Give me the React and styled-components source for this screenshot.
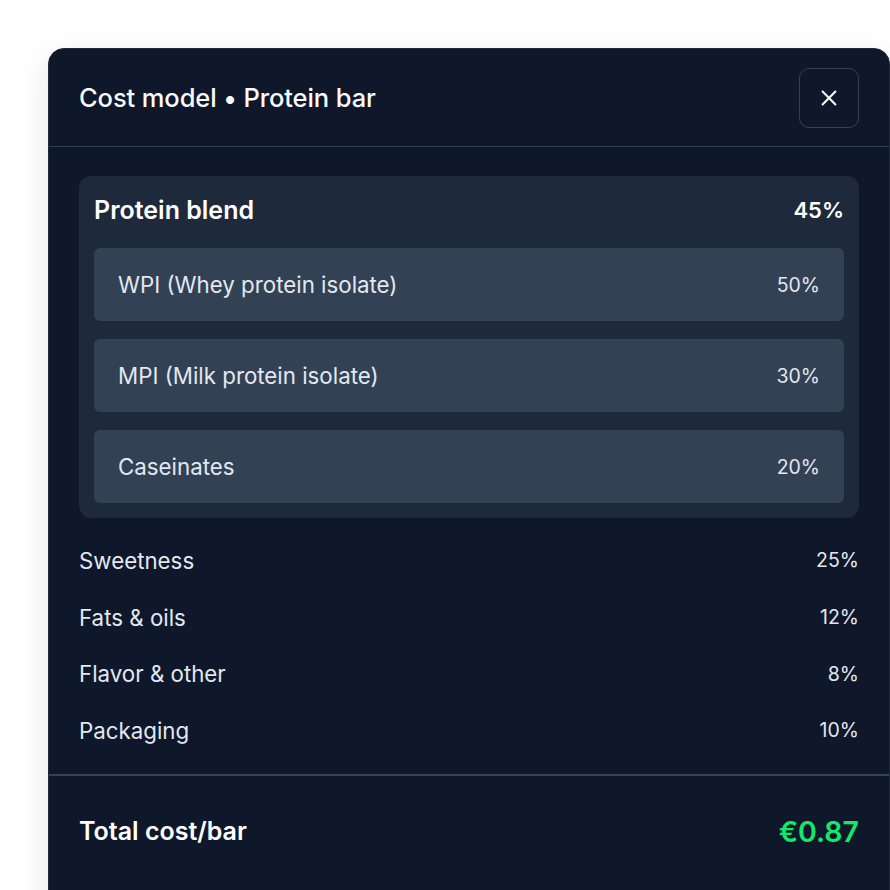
import React from "react";
import styled, { createGlobalStyle } from "styled-components";

const Global = createGlobalStyle`
  html, body { margin: 0; padding: 0; background: #ffffff; }
  body { font-family: Inter, "Noto Sans", sans-serif; -webkit-font-smoothing: antialiased; }
  * { box-sizing: border-box; }
`;

const Page = styled.div`
  padding: 48px 0 0 48px;
  width: 890px;
  height: 890px;
  overflow: hidden;
`;

const Panel = styled.div`
  width: 842px;
  background: #0f172a;
  border: 1px solid #1e293b;
  border-radius: 16px;
  box-shadow: 0 10px 30px rgba(15, 23, 42, 0.12);
  color: #f1f5f9;
`;

const Header = styled.div`
  display: flex;
  align-items: center;
  justify-content: space-between;
  height: 98px;
  padding: 0 30px;
  border-bottom: 1px solid #334155;
`;

const Title = styled.h2`
  margin: 0;
  font-size: 25.5px;
  font-weight: 500;
  letter-spacing: -0.1px;
  color: #f8fafc;
`;

const CloseButton = styled.button`
  width: 60px;
  height: 60px;
  display: flex;
  align-items: center;
  justify-content: center;
  background: transparent;
  border: 1.5px solid #334155;
  border-radius: 10px;
  color: #ffffff;
  padding: 0;
  cursor: pointer;
`;

const Body = styled.div`
  padding: 29px 30px 0 30px;
`;

const Group = styled.div`
  background: #1e293b;
  border-radius: 12px;
  padding: 16px 15px 15px 15px;
  display: flex;
  flex-direction: column;
  gap: 18px;
`;

const GroupHead = styled.div`
  display: flex;
  justify-content: space-between;
  align-items: center;
  height: 36px;
  margin-bottom: 2px;
  font-weight: 600;
  color: #ffffff;
`;

const GroupName = styled.span`
  font-size: 25px;
`;

const GroupValue = styled.span`
  font-size: 22px;
`;

const SubItem = styled.div`
  display: flex;
  justify-content: space-between;
  align-items: center;
  height: 73px;
  padding: 0 24px 0 24px;
  background: #334155;
  border-radius: 6px;
  color: #e2e8f0;
`;

const Label = styled.span`
  font-size: 22.3px;
  font-weight: 400;
`;

const Value = styled.span`
  font-size: 19.5px;
  font-weight: 400;
`;

const Rows = styled.div`
  display: flex;
  flex-direction: column;
  padding: 14px 0 15px;
`;

const Row = styled.div`
  display: flex;
  justify-content: space-between;
  align-items: center;
  height: 56.7px;
  color: #e2e8f0;
`;

const Footer = styled.div`
  display: flex;
  justify-content: space-between;
  align-items: flex-start;
  padding: 40px 30px 0;
  height: 150px;
  border-top: 2px solid #334155;
`;

const TotalLabel = styled.span`
  font-size: 25px;
  font-weight: 600;
  color: #ffffff;
`;

const TotalValue = styled.span`
  font-size: 28.5px;
  font-weight: 600;
  color: #12e86a;
  margin-top: -2px;
`;

const subs = [
  ["WPI (Whey protein isolate)", "50%"],
  ["MPI (Milk protein isolate)", "30%"],
  ["Caseinates", "20%"],
];

const rows = [
  ["Sweetness", "25%"],
  ["Fats & oils", "12%"],
  ["Flavor & other", "8%"],
  ["Packaging", "10%"],
];

export default function App() {
  return (
    <>
      <Global />
      <Page>
        <Panel>
          <Header>
            <Title>Cost model • Protein bar</Title>
            <CloseButton aria-label="Close">
              <svg width="22" height="22" viewBox="0 0 24 24" fill="none" stroke="currentColor" strokeWidth="2.2" strokeLinecap="round">
                <path d="M5 5l14 14M19 5L5 19" />
              </svg>
            </CloseButton>
          </Header>
          <Body>
            <Group>
              <GroupHead>
                <GroupName>Protein blend</GroupName>
                <GroupValue>45%</GroupValue>
              </GroupHead>
              {subs.map(([n, v]) => (
                <SubItem key={n}>
                  <Label>{n}</Label>
                  <Value>{v}</Value>
                </SubItem>
              ))}
            </Group>
            <Rows>
              {rows.map(([n, v]) => (
                <Row key={n}>
                  <Label>{n}</Label>
                  <Value>{v}</Value>
                </Row>
              ))}
            </Rows>
          </Body>
          <Footer>
            <TotalLabel>Total cost/bar</TotalLabel>
            <TotalValue>€0.87</TotalValue>
          </Footer>
        </Panel>
      </Page>
    </>
  );
}
